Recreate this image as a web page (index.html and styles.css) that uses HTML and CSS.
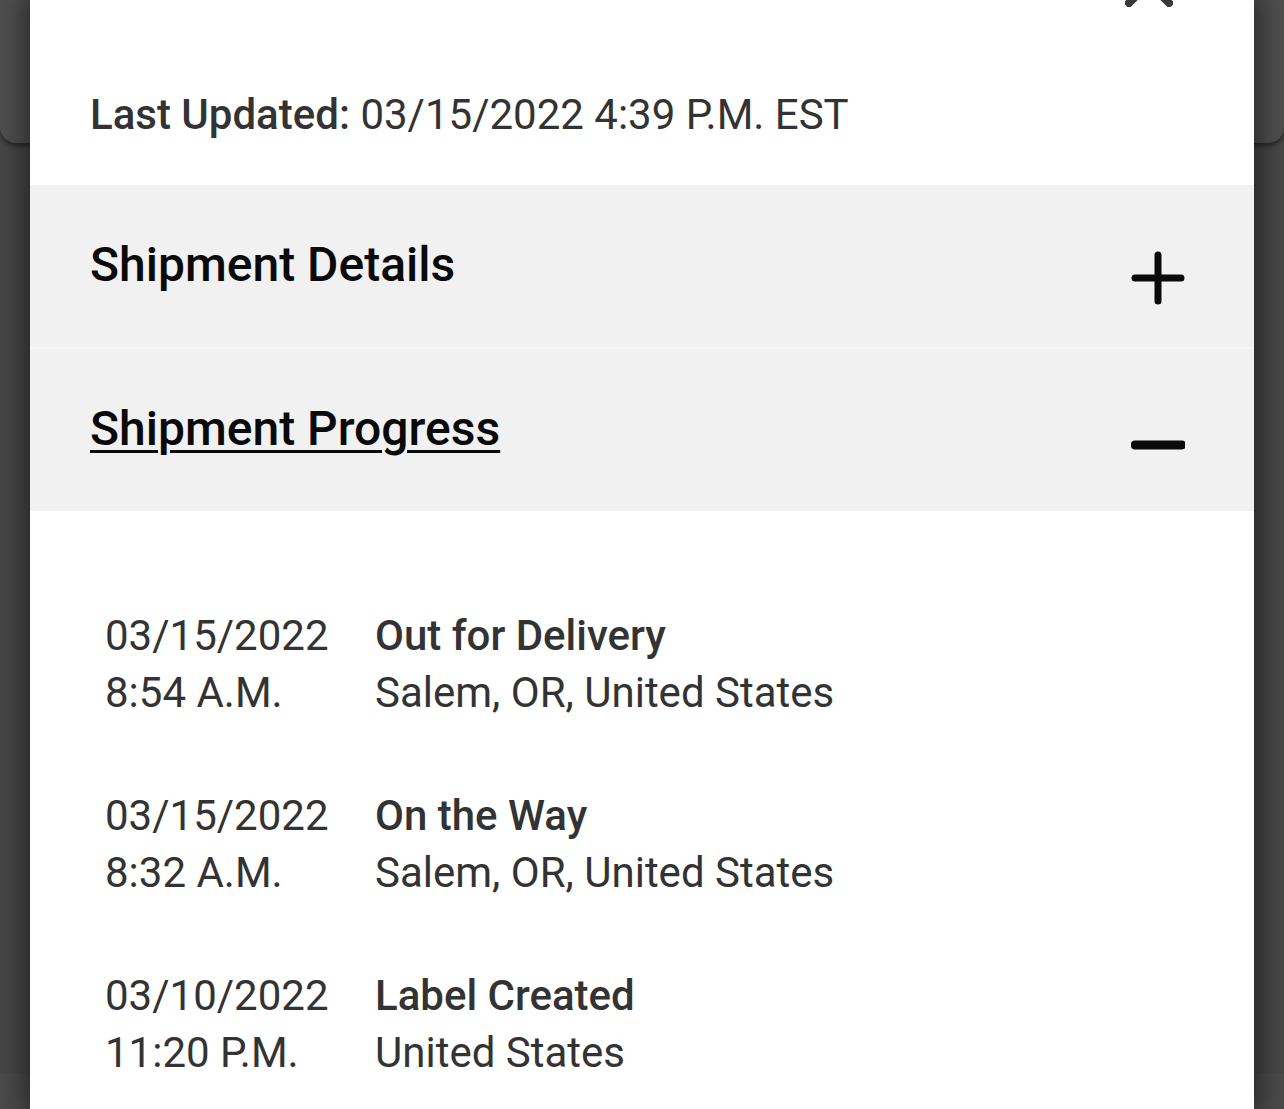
FILE: index.html
```html
<!DOCTYPE html>
<html lang="en">
<head>
<meta charset="utf-8">
<title>Shipment Tracking</title>
<link rel="stylesheet" href="styles.css">
</head>
<body>
<div class="page-behind">
  <div class="behind-card"></div>
  <div class="behind-footer"></div>
</div>
<div class="modal">
  <div class="topbar">
    <button class="close" aria-label="Close">
      <svg viewBox="0 0 48 48" width="48" height="48"><path d="M4 4 L44 44 M44 4 L4 44" stroke="#3a3a3a" stroke-width="8" stroke-linecap="square" fill="none"/></svg>
    </button>
  </div>
  <p class="updated"><span class="label">Last Updated:</span> 03/15/2022 4:39 P.M. EST</p>

  <div class="section">
    <h2 class="section-title">Shipment Details</h2>
    <svg class="toggle" viewBox="0 0 54 54" width="54" height="54"><path d="M27 4 V50 M4 27 H50" stroke="#0a0a0a" stroke-width="7" stroke-linecap="round" fill="none"/></svg>
  </div>
  <div class="section">
    <h2 class="section-title underlined">Shipment Progress</h2>
    <svg class="toggle minus" viewBox="0 0 54 54" width="54" height="54"><path d="M4 27 H51" stroke="#0a0a0a" stroke-width="9" stroke-linecap="round" fill="none"/></svg>
  </div>

  <div class="timeline">
    <div class="event">
      <div class="when">03/15/2022<br>8:54 A.M.</div>
      <div class="what"><span class="status">Out for Delivery</span><br>Salem, OR, United States</div>
    </div>
    <div class="event">
      <div class="when">03/15/2022<br>8:32 A.M.</div>
      <div class="what"><span class="status">On the Way</span><br>Salem, OR, United States</div>
    </div>
    <div class="event">
      <div class="when">03/10/2022<br>11:20 P.M.</div>
      <div class="what"><span class="status">Label Created</span><br>United States</div>
    </div>
  </div>
</div>
</body>
</html>
```
FILE: styles.css
```css
html, body {
  margin: 0;
  padding: 0;
  height: 100%;
  overflow: hidden;
}
body {
  background: #474747;
  font-family: Roboto, "Noto Sans", "Liberation Sans", sans-serif;
  position: relative;
}
.page-behind {
  position: absolute;
  inset: 0;
  z-index: 0;
}
.behind-card {
  position: absolute;
  left: 0;
  right: 0;
  top: -20px;
  height: 163px;
  background: #4f4f4f;
  border-radius: 0 0 16px 16px;
  box-shadow: 0 3px 4px rgba(0,0,0,0.45);
}
.behind-footer {
  position: absolute;
  left: 0;
  right: 0;
  top: 1073px;
  bottom: 0;
  background: #4b4b4b;
}
.modal {
  position: relative;
  z-index: 1;
  margin: 0 30px;
  min-height: 1109px;
  background: #ffffff;
  box-shadow: 0 0 26px 6px rgba(0,0,0,0.5);
}
.topbar {
  display: flex;
  justify-content: flex-end;
  height: 90px;
  padding-right: 81px;
}
.close {
  margin-top: -41px;
  width: 48px;
  height: 48px;
  padding: 0;
  border: 0;
  background: none;
}
.close svg { display: block; }
.updated {
  margin: 0;
  padding: 0 0 45px 60px;
  font-size: 42px;
  line-height: 50px;
  color: #333333;
}
.label { font-weight: 500; }
.section {
  display: flex;
  justify-content: space-between;
  align-items: flex-start;
  height: 162px;
  box-sizing: border-box;
  padding: 52px 69px 0 60px;
  background: #f1f1f1;
}
.section + .section {
  border-top: 2px solid #f7f7f7;
  height: 164px;
}
.section-title {
  margin: 0;
  font-size: 48px;
  line-height: 56px;
  font-weight: 500;
  color: #0a0a0a;
}
.underlined {
  text-decoration: underline;
  text-decoration-thickness: 3px;
  text-underline-offset: 5px;
}
.toggle {
  display: block;
  margin-top: 14px;
}
.toggle.minus { margin-top: 17px; }
.timeline {
  padding: 96px 0 0 75px;
  display: flex;
  flex-direction: column;
  gap: 66px;
}
.event {
  display: flex;
  font-size: 42px;
  line-height: 57px;
  color: #333333;
}
.when { width: 270px; }
.status { font-weight: 500; }
```
